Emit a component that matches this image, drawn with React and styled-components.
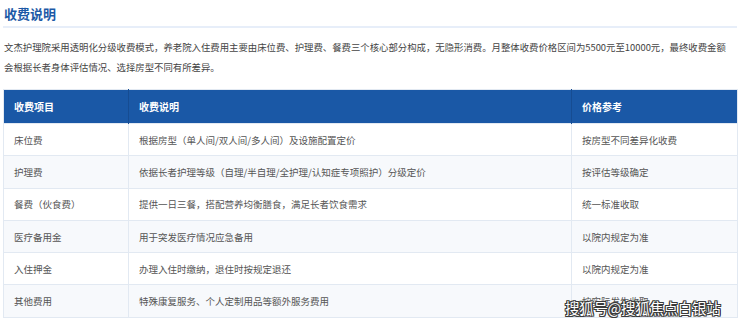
import styled, { createGlobalStyle } from 'styled-components';

const GlobalStyle = createGlobalStyle`
  body {
    margin: 0;
    background: #fff;
    font-family: "Noto Sans CJK SC", "Noto Sans", sans-serif;
  }
`;

const Page = styled.div`
  position: relative;
  width: 740px;
  height: 326px;
  padding: 0 3px;
  box-sizing: border-box;
  overflow: hidden;
`;

const Title = styled.h2`
  margin: 0;
  padding: 5px 0 3px 1px;
  font-size: 13px;
  line-height: 18px;
  font-weight: 700;
  color: #1c59a6;
  border-bottom: 2px solid #e7eef9;
`;

const Intro = styled.p`
  max-width: 729px;
  margin: 9px 0 12px 1px;
  font-size: 9.4px;
  line-height: 20px;
  color: #444;
`;

const Table = styled.table`
  width: 734px;
  border-collapse: collapse;
  table-layout: fixed;
  border: 1px solid #e2e9f2;
  font-size: 9.5px;
  color: #555;
`;

const HeadCell = styled.th`
  height: 33px;
  padding: 0 0 0 10px;
  text-align: left;
  background: #1a58a6;
  color: #fff;
  font-weight: 700;
  font-size: 10px;
  border-right: 1px solid #164c92;
  &:last-child { border-right: none; }
`;

const Row = styled.tr`
  background: ${props => props.$shade ? '#f7f9fc' : '#fff'};
`;

const Cell = styled.td`
  height: 31.3px;
  padding: 0 0 0 10px;
  border-top: 1px solid #e2e9f2;
  border-right: 1px solid #e2e9f2;
`;

// 水印压在表格最后一行上
const Watermark = styled.div`
  position: absolute;
  left: 565px;
  top: 298px;
  font-size: 14.5px;
  line-height: 20px;
  letter-spacing: -0.3px;
  color: #fff;
  text-shadow:
    1px 0 0 #3a3a3a, -1px 0 0 #3a3a3a, 0 1px 0 #3a3a3a, 0 -1px 0 #3a3a3a,
    1px 1px 0 #3a3a3a, -1px -1px 0 #3a3a3a, 1px -1px 0 #3a3a3a, -1px 1px 0 #3a3a3a;
`;

const rows = [
  ['床位费', '根据房型（单人间/双人间/多人间）及设施配置定价', '按房型不同差异化收费'],
  ['护理费', '依据长者护理等级（自理/半自理/全护理/认知症专项照护）分级定价', '按评估等级确定'],
  ['餐费（伙食费）', '提供一日三餐，搭配营养均衡膳食，满足长者饮食需求', '统一标准收取'],
  ['医疗备用金', '用于突发医疗情况应急备用', '以院内规定为准'],
  ['入住押金', '办理入住时缴纳，退住时按规定退还', '以院内规定为准'],
  ['其他费用', '特殊康复服务、个人定制用品等额外服务费用', '按实际发生收取'],
];

const App = () => {
  return (
    <Page>
      <GlobalStyle />
      <Title>收费说明</Title>
      <Intro>
        文杰护理院采用透明化分级收费模式，养老院入住费用主要由床位费、护理费、餐费三个核心部分构成，无隐形消费。月整体收费价格区间为5500元至10000元，最终收费金额会根据长者身体评估情况、选择房型不同有所差异。
      </Intro>
      <Table>
        <colgroup>
          <col style={{ width: 125 }} />
          <col style={{ width: 443 }} />
          <col style={{ width: 166 }} />
        </colgroup>
        <thead>
          <tr>
            <HeadCell>收费项目</HeadCell>
            <HeadCell>收费说明</HeadCell>
            <HeadCell>价格参考</HeadCell>
          </tr>
        </thead>
        <tbody>
          {rows.map((r, i) => (
            <Row key={r[0]} $shade={i % 2 === 1}>
              {r.map(c => <Cell key={c}>{c}</Cell>)}
            </Row>
          ))}
        </tbody>
      </Table>
      <Watermark>搜狐号@搜狐焦点白银站</Watermark>
    </Page>
  );
};

export default App;
